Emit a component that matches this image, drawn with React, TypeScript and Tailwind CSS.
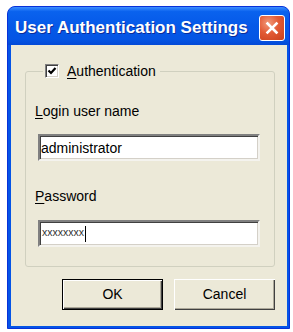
const FONT = { fontFamily: '"Liberation Sans", Arial, sans-serif' };

function CheckBox() {
  return (
    <div className="w-[14px] h-[14px] bg-white border border-t-[#808080] border-l-[#808080] border-b-white border-r-white shadow-[inset_1px_1px_0_#404040,inset_-1px_-1px_0_#D4D0C8] flex items-center justify-center">
      <svg width="10" height="10" viewBox="0 0 10 10">
        <path d="M1.5 4.5 L4 7 L8.5 2" stroke="#000" strokeWidth="2.2" fill="none" />
      </svg>
    </div>
  );
}

function Field({ children }: { children?: React.ReactNode }) {
  return (
    <div className="ml-[12px] w-[222px] h-[27px] bg-white flex items-center pl-[1px] border-2 border-t-[#808080] border-l-[#808080] border-b-[#F4F3EE] border-r-[#F4F3EE] shadow-[inset_1px_1px_0_#404040,inset_-1px_-1px_0_#D4D0C8]">
      {children}
    </div>
  );
}

export default function App() {
  return (
    <div className="w-[293px] h-[332px] bg-white pt-[6px] pl-[7px]" style={FONT}>
      <div className="w-[283px] h-[323px] rounded-t-[8px] bg-[#0554E6] border border-[#0831D9] flex flex-col overflow-hidden">
        {/* title bar */}
        <div className="h-[38px] flex items-center justify-between pl-[7px] pr-[4px] bg-[linear-gradient(180deg,#3D8EFF_0%,#0A62EE_12%,#0559E8_50%,#0455E4_85%,#0349D6_100%)]">
          <span className="text-white text-[17px] font-bold pt-[4px] [text-shadow:1px_1px_0_#0A2C99]">
            User Authentication Settings
          </span>
          <div className="mt-[3px] w-[26px] h-[26px] rounded-[3px] border border-white bg-[radial-gradient(circle_at_35%_30%,#F29A7A_0%,#E25A35_45%,#C9401C_100%)] flex items-center justify-center">
            <svg width="16" height="16" viewBox="0 0 16 16">
              <path d="M3.5 3.5 L12.5 12.5 M12.5 3.5 L3.5 12.5" stroke="#fff" strokeWidth="2.6" strokeLinecap="square" />
            </svg>
          </div>
        </div>
        {/* client area */}
        <div className="ml-[3px] mr-[2px] h-[281px] bg-[#ECE9D8] text-[14px] text-black flex flex-col">
          <fieldset className="ml-[14px] mt-[18px] w-[250px] h-[204px] border border-[#D0D0BF] rounded-[3px] p-0 m-0">
            <legend className="ml-[17px] px-[2px] flex items-center gap-[8px] h-[16px] leading-[16px]">
              <CheckBox />
              <span className="pr-[2px]">
                <u className="underline-offset-2">A</u>uthentication
              </span>
            </legend>
            <div className="ml-[9px] mt-[24px] leading-[16px]">
              <u className="underline-offset-2">L</u>ogin user name
            </div>
            <div className="mt-[15px]">
              <Field>
                <span className="leading-[16px]">administrator</span>
              </Field>
            </div>
            <div className="ml-[9px] mt-[27px] leading-[16px]">
              <u className="underline-offset-2">P</u>assword
            </div>
            <div className="mt-[16px]">
              <Field>
                <span className="text-[10.5px] leading-[10px] pl-[1px] -mt-[4px] text-[#333]">xxxxxxxx</span>
                <span className="w-[1px] h-[16px] bg-black ml-[1px]" />
              </Field>
            </div>
          </fieldset>
          <div className="mt-[12px] flex gap-[11px] ml-[51px]">
            <button className="w-[101px] h-[31px] border border-black bg-[#ECE9D8] shadow-[inset_1px_1px_0_#fff,inset_-1px_-1px_0_#404040,inset_-2px_-2px_0_#ACA899]">
              OK
            </button>
            <button className="w-[101px] h-[31px] bg-[#ECE9D8] shadow-[inset_1px_1px_0_#fff,inset_-1px_-1px_0_#404040,inset_-2px_-2px_0_#ACA899]">
              Cancel
            </button>
          </div>
        </div>
      </div>
    </div>
  );
}
